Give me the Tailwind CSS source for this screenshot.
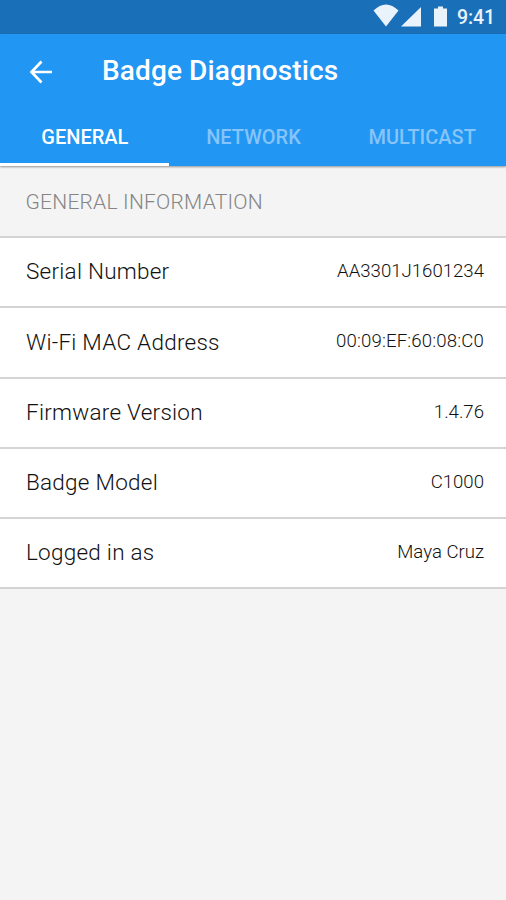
<!DOCTYPE html>
<html lang="en">
<head>
<meta charset="utf-8">
<title>Badge Diagnostics</title>
<script src="https://cdn.jsdelivr.net/npm/@tailwindcss/browser@4"></script>
</head>
<body class="w-[506px] h-[900px] overflow-hidden bg-[#f4f4f4] font-['Roboto',sans-serif] text-[#111111]">
<div class="flex h-[34px] items-center justify-end bg-[#1a70b8] pr-[11px] text-[#e9f3fc]">
  <svg class="w-[84px] h-[34px] shrink-0" viewBox="0 0 84 34" fill="currentColor"><path d="M.5 10.500Q13-1.500 25.500 10.500L13 26.500Z"/><path d="M28 26.500L48 7V26.500Z"/><path d="M61 8.500H65V6.500H70V8.500H74V26.500H61Z"/></svg>
  <span class="pt-px text-[19.500px] leading-[33px] font-medium tracking-[-0.1px]">9:41</span>
</div>
<header class="bg-[#2196f3] h-[132px] text-white shadow-[0_1px_2px_rgba(0,0,0,0.4)] relative">
  <div class="flex h-[74px] items-center pl-[29px]">
    <svg class="w-[24px] h-[24px] mt-[2px] shrink-0" viewBox="0 0 24 24" fill="none" stroke="currentColor" stroke-width="2.700"><path d="M12.500 1.500L2.500 12L12.500 22.500M2.500 12H23"/></svg>
    <h1 class="ml-[49px] text-[28px] font-medium leading-none tracking-[0.12px] whitespace-nowrap">Badge Diagnostics</h1>
  </div>
  <nav class="grid grid-cols-3 h-[58px] text-center text-[20px] leading-[58px] font-medium">
    <div class="h-[58px] pl-px border-b-[3px] border-white">GENERAL</div>
    <div class="h-[58px] pl-px text-[#86c4f9]">NETWORK</div>
    <div class="h-[58px] pl-px text-[#86c4f9]">MULTICAST</div>
  </nav>
</header>
<main>
  <h2 class="h-[70px] pl-[25.500px] text-[21px] leading-[72px] font-light tracking-[0.22px] text-[#858585]">GENERAL INFORMATION</h2>
  <dl class="bg-white border-t-2 border-[#d4d4d4] font-light">
    <div class="flex h-[70.25px] items-center justify-between border-b-2 border-[#d4d4d4] pl-[26px] pr-[22px]"><dt class="text-[22.500px] tracking-[0.25px]">Serial Number</dt><dd class="text-[18.600px]">AA3301J1601234</dd></div>
    <div class="flex h-[70.25px] items-center justify-between border-b-2 border-[#d4d4d4] pl-[26px] pr-[22px]"><dt class="text-[22.500px] tracking-[0.25px]">Wi-Fi MAC Address</dt><dd class="text-[18.600px] tracking-[0.15px]">00:09:EF:60:08:C0</dd></div>
    <div class="flex h-[70.25px] items-center justify-between border-b-2 border-[#d4d4d4] pl-[26px] pr-[22px]"><dt class="text-[22.500px] tracking-[0.25px]">Firmware Version</dt><dd class="text-[18.600px]">1.4.76</dd></div>
    <div class="flex h-[70.25px] items-center justify-between border-b-2 border-[#d4d4d4] pl-[26px] pr-[22px]"><dt class="text-[22.500px] tracking-[0.25px]">Badge Model</dt><dd class="text-[18.600px]">C1000</dd></div>
    <div class="flex h-[70.25px] items-center justify-between border-b-2 border-[#d4d4d4] pl-[26px] pr-[22px]"><dt class="text-[22.500px] tracking-[0.25px]">Logged in as</dt><dd class="text-[18.600px]">Maya Cruz</dd></div>
  </dl>
</main>
</body>
</html>
